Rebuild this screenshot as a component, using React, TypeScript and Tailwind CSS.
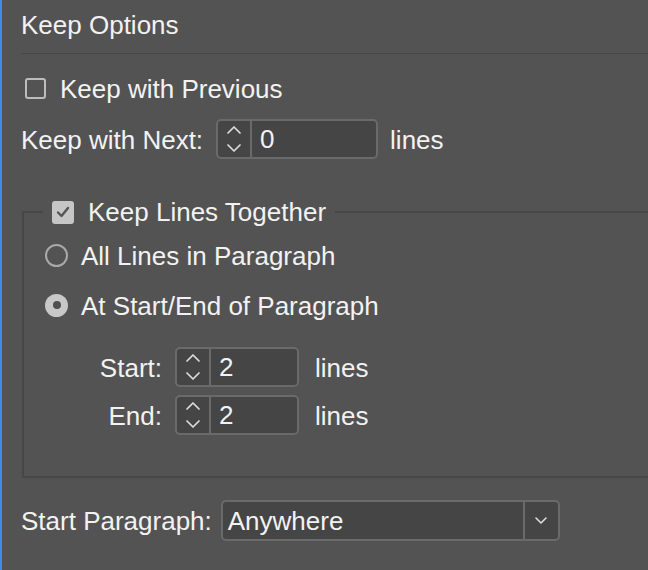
import React from "react";

function Chevrons() {
  return (
    <svg width="18" height="32" viewBox="0 0 18 32" fill="none" stroke="#dcdcdc" strokeWidth="1.7" strokeLinecap="round" strokeLinejoin="round">
      <polyline points="3,10 9,4 15,10" />
      <polyline points="3,22 9,28 15,22" />
    </svg>
  );
}

function Spinner({ width, value }: { width: string; value: string }) {
  return (
    <div className={`flex h-[40px] ${width} border-2 border-[#6a6a6a] rounded-[5px] bg-[#454545] shrink-0`}>
      <div className="w-[34px] flex items-center justify-center border-r-2 border-[#6a6a6a] shrink-0">
        <Chevrons />
      </div>
      <div className="flex items-center pl-[8px]">{value}</div>
    </div>
  );
}

function Radio({ checked }: { checked?: boolean }) {
  if (checked) {
    return (
      <div className="w-[23px] h-[23px] rounded-full bg-[#c8c8c8] flex items-center justify-center shrink-0">
        <div className="w-[8px] h-[8px] rounded-full bg-[#505050]" />
      </div>
    );
  }
  return <div className="w-[23px] h-[23px] rounded-full border-2 border-[#a9a9a9] shrink-0" />;
}

export default function App() {
  return (
    <div className="w-[648px] h-[570px] bg-[#535353] flex overflow-hidden font-['Liberation_Sans',Arial,sans-serif] text-[26px] leading-none text-[#f2f2f2]">
      <div className="w-[2px] bg-[#3b8ee8] shrink-0" />
      <div className="flex-1 flex flex-col pl-[19px] min-w-0">
        <div className="h-[54px] flex items-center pb-[4px] border-b border-[#474747] shrink-0">
          Keep Options
        </div>

        <div className="mt-[14px] h-[40px] flex items-center shrink-0">
          <div className="ml-[4px] w-[21px] h-[21px] border-2 border-[#bdbdbd] rounded-[3px] shrink-0" />
          <span className="ml-[14px] pt-[1px]">Keep with Previous</span>
        </div>

        <div className="mt-[11px] h-[40px] flex items-center shrink-0">
          <span className="pt-[1px]">Keep with Next:</span>
          <div className="ml-[13px]">
            <Spinner width="w-[162px]" value="0" />
          </div>
          <span className="ml-[12px] pt-[1px]">lines</span>
        </div>

        <fieldset className="mt-[40px] ml-[1px] w-[660px] border-2 border-[#474747] pb-[41px] shrink-0">
          <legend className="ml-[19px] px-[9px]">
            <div className="h-[26px] flex items-center">
              <div className="w-[22px] h-[23px] bg-[#c6c6c6] rounded-[3px] flex items-center justify-center shrink-0">
                <svg width="14" height="12" viewBox="0 0 14 12" fill="none" stroke="#555555" strokeWidth="2.4" strokeLinecap="round" strokeLinejoin="round">
                  <polyline points="2,6.5 5.5,10 12,2" />
                </svg>
              </div>
              <span className="ml-[14px]">Keep Lines Together</span>
            </div>
          </legend>

          <div className="mt-[10px] h-[40px] flex items-center ml-[21px]">
            <Radio />
            <span className="ml-[13px] pt-[1px]">All Lines in Paragraph</span>
          </div>
          <div className="mt-[10px] h-[40px] flex items-center ml-[21px]">
            <Radio checked />
            <span className="ml-[13px] pt-[1px]">At Start/End of Paragraph</span>
          </div>

          <div className="mt-[22px] h-[40px] flex items-center">
            <div className="w-[138px] text-right shrink-0 pt-[1px]">Start:</div>
            <div className="ml-[13px]">
              <Spinner width="w-[124px]" value="2" />
            </div>
            <span className="ml-[16px] pt-[1px]">lines</span>
          </div>
          <div className="mt-[8px] h-[40px] flex items-center">
            <div className="w-[138px] text-right shrink-0 pt-[1px]">End:</div>
            <div className="ml-[13px]">
              <Spinner width="w-[124px]" value="2" />
            </div>
            <span className="ml-[16px] pt-[1px]">lines</span>
          </div>
        </fieldset>

        <div className="mt-[22px] h-[41px] flex items-center shrink-0">
          <span className="pt-[1px]">Start Paragraph:</span>
          <div className="ml-[9px] flex h-[41px] w-[339px] border-2 border-[#6a6a6a] rounded-[5px] bg-[#454545]">
            <div className="flex-1 flex items-center pl-[5px]">Anywhere</div>
            <div className="w-[35px] flex items-center justify-center border-l-2 border-[#6a6a6a]">
              <svg width="14" height="9" viewBox="0 0 14 9" fill="none" stroke="#dcdcdc" strokeWidth="1.6" strokeLinecap="round" strokeLinejoin="round">
                <polyline points="2,2 7,7 12,2" />
              </svg>
            </div>
          </div>
        </div>
      </div>
    </div>
  );
}
